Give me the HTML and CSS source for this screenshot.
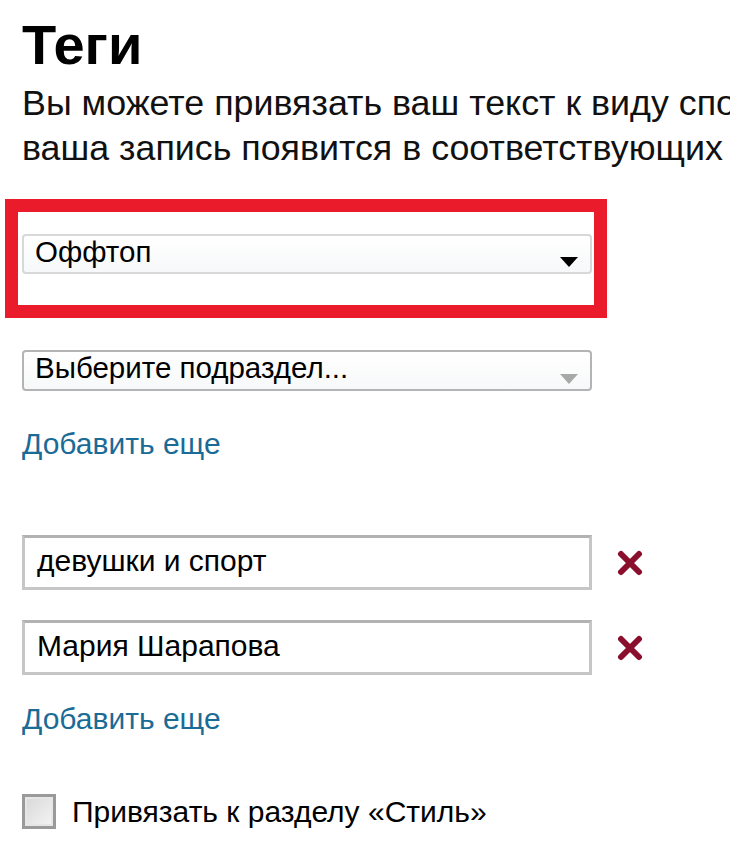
FILE: index.html
```html
<!DOCTYPE html>
<html lang="ru">
<head>
<meta charset="utf-8">
<title>Теги</title>
<link rel="stylesheet" href="styles.css">
</head>
<body>
<div class="page">
  <h1 class="title">Теги</h1>
  <p class="intro">Вы можете привязать ваш текст к виду спорта, и<br>ваша запись появится в соответствующих разделах.</p>

  <div class="highlight">
    <div class="select select-active">
      <span class="select-text">Оффтоп</span>
      <svg class="select-arrow" width="18" height="10" viewBox="0 0 18 10"><path d="M0 0H18L9 10Z" fill="#000"/></svg>
    </div>
  </div>

  <div class="select select-muted">
    <span class="select-text">Выберите подраздел...</span>
    <svg class="select-arrow" width="18" height="10" viewBox="0 0 18 10"><path d="M0 0H18L9 10Z" fill="#a8a8a8"/></svg>
  </div>

  <a class="add-link add-link-first" href="#">Добавить еще</a>

  <div class="tag-row tag-row-first">
    <div class="tag-input">девушки и спорт</div>
    <svg class="remove" width="26" height="26" viewBox="0 0 26 26"><path d="M4 4L22 22M22 4L4 22" stroke="#8a0f2c" stroke-width="6" stroke-linecap="round"/></svg>
  </div>
  <div class="tag-row">
    <div class="tag-input">Мария Шарапова</div>
    <svg class="remove" width="26" height="26" viewBox="0 0 26 26"><path d="M4 4L22 22M22 4L4 22" stroke="#8a0f2c" stroke-width="6" stroke-linecap="round"/></svg>
  </div>

  <a class="add-link add-link-second" href="#">Добавить еще</a>

  <label class="check-row">
    <span class="checkbox"></span>
    <span class="check-label">Привязать к разделу «Стиль»</span>
  </label>
</div>
</body>
</html>
```

FILE: styles.css
```css
html, body {
  margin: 0;
  padding: 0;
  overflow: hidden;
  background: #fff;
}

body {
  font-family: "Liberation Sans", Arial, sans-serif;
  color: #111;
}

.page {
  padding: 15px 0 0 22px;
  display: flex;
  flex-direction: column;
  align-items: flex-start;
}

.title {
  margin: 0;
  font-size: 56px;
  line-height: 60px;
  font-weight: bold;
  color: #000;
}

.intro {
  margin: 6px 0 0;
  font-size: 35.8px;
  line-height: 45px;
  white-space: nowrap;
}

.highlight {
  box-sizing: border-box;
  margin: 28px 0 0 -17px;
  width: 602px;
  border: 13px solid #ea1c2b;
  padding: 22px 2px 31px 4px;
}

.select {
  box-sizing: border-box;
  width: 570px;
  height: 41px;
  border-radius: 4px;
  display: flex;
  justify-content: space-between;
  align-items: flex-start;
  padding: 0 12px 0 11px;
  font-size: 29.5px;
  line-height: 32px;
  color: #000;
  background: linear-gradient(#ffffff, #f7f8f9);
}

.select-active {
  height: 40px;
  border: 2px solid #d6d8da;
}

.select-muted {
  margin-top: 32px;
  border: 2px solid #b4b4b4;
}

.select-arrow {
  align-self: flex-end;
  margin-bottom: 5px;
}

.add-link {
  font-size: 30px;
  line-height: 32px;
  color: #1b6b97;
  text-decoration: none;
}

.add-link-first {
  margin-top: 37px;
}

.add-link-second {
  margin-top: 28px;
}

.tag-row {
  display: flex;
  align-items: center;
  gap: 25px;
  margin-top: 30px;
}

.tag-row-first {
  margin-top: 75px;
}

.tag-input {
  box-sizing: border-box;
  width: 570px;
  height: 55px;
  border: 3px solid #c6c6c6;
  border-top-color: #b2b2b2;
  padding: 7px 12px 0;
  font-size: 30px;
  line-height: 32px;
  color: #000;
  background: #fff;
}

.check-row {
  display: flex;
  align-items: center;
  gap: 16px;
  margin-top: 59px;
}

.checkbox {
  box-sizing: border-box;
  width: 34px;
  height: 35px;
  border: 3px solid #9a9a9a;
  background: linear-gradient(135deg, #d8d8d8, #f4f4f4);
  box-shadow: inset 0 0 0 2px #e6e6e6;
}

.check-label {
  font-size: 30px;
  line-height: 32px;
  color: #000;
}
```
